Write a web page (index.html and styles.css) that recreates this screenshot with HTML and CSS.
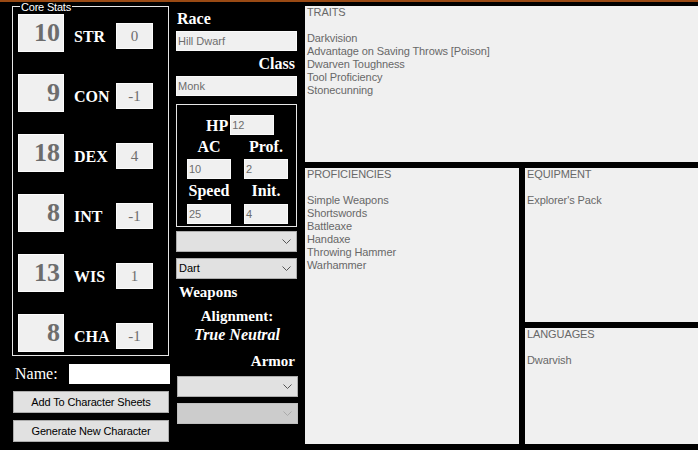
FILE: index.html
```html
<!DOCTYPE html>
<html>
<head>
<meta charset="utf-8">
<link rel="stylesheet" href="styles.css">
</head>
<body>
<div class="app">
  <div class="left">
    <div class="core">
      <span class="legend">Core Stats</span>
      <div class="stat"><div class="big">10</div><div class="abbr">STR</div><div class="mod">0</div></div>
      <div class="stat"><div class="big">9</div><div class="abbr">CON</div><div class="mod">-1</div></div>
      <div class="stat"><div class="big">18</div><div class="abbr">DEX</div><div class="mod">4</div></div>
      <div class="stat"><div class="big">8</div><div class="abbr">INT</div><div class="mod">-1</div></div>
      <div class="stat"><div class="big">13</div><div class="abbr">WIS</div><div class="mod">1</div></div>
      <div class="stat"><div class="big">8</div><div class="abbr">CHA</div><div class="mod">-1</div></div>
    </div>
    <div class="namerow"><span class="namelabel">Name:</span><div class="nameinput"></div></div>
    <div class="btn btn1">Add To Character Sheets</div>
    <div class="btn btn2">Generate New Character</div>
  </div>

  <div class="mid">
    <div class="lbl race">Race</div>
    <div class="tb tb1">Hill Dwarf</div>
    <div class="lbl cls">Class</div>
    <div class="tb tb2">Monk</div>
    <div class="vitals">
      <div class="hprow"><span class="vl">HP</span><div class="vin">12</div></div>
      <div class="vgrid g1">
        <span class="vl">AC</span><span class="vl">Prof.</span>
      </div>
      <div class="vgrid g2">
        <div class="vin">10</div><div class="vin">2</div>
      </div>
      <div class="vgrid g3">
        <span class="vl">Speed</span><span class="vl">Init.</span>
      </div>
      <div class="vgrid g4">
        <div class="vin">25</div><div class="vin">4</div>
      </div>
    </div>
    <div class="combo c1"><span></span><svg class="chev" width="9" height="5" viewBox="0 0 9 5"><polyline points="0.5,0.5 4.5,4.5 8.5,0.5" fill="none" stroke="#555" stroke-width="1"/></svg></div>
    <div class="combo c2"><span>Dart</span><svg class="chev" width="9" height="5" viewBox="0 0 9 5"><polyline points="0.5,0.5 4.5,4.5 8.5,0.5" fill="none" stroke="#555" stroke-width="1"/></svg></div>
    <div class="lbl weapons">Weapons</div>
    <div class="lbl align">Alignment:</div>
    <div class="lbl neutral">True Neutral</div>
    <div class="lbl armor">Armor</div>
    <div class="combo c3"><span></span><svg class="chev" width="9" height="5" viewBox="0 0 9 5"><polyline points="0.5,0.5 4.5,4.5 8.5,0.5" fill="none" stroke="#555" stroke-width="1"/></svg></div>
    <div class="combo c4 disabled"><span></span><svg class="chev" width="9" height="5" viewBox="0 0 9 5"><polyline points="0.5,0.5 4.5,4.5 8.5,0.5" fill="none" stroke="#aaa" stroke-width="1"/></svg></div>
  </div>

  <div class="right">
    <div class="panel traits">TRAITS<br><br>Darkvision<br>Advantage on Saving Throws [Poison]<br>Dwarven Toughness<br>Tool Proficiency<br>Stonecunning</div>
    <div class="panel prof">PROFICIENCIES<br><br>Simple Weapons<br>Shortswords<br>Battleaxe<br>Handaxe<br>Throwing Hammer<br>Warhammer</div>
    <div class="panel equip">EQUIPMENT<br><br>Explorer's Pack</div>
    <div class="panel lang">LANGUAGES<br><br>Dwarvish</div>
  </div>
</div>
</body>
</html>
```
FILE: styles.css
```css
html, body { margin: 0; padding: 0; background: #000; }
.app {
  width: 698px; height: 450px; box-sizing: border-box;
  border-top: 2px solid #9a4a14;
  background: #000; display: flex; overflow: hidden;
  font-family: "Liberation Sans", Arial, sans-serif;
}
/* left column */
.left { margin-left: 12px; width: 158px; display: flex; flex-direction: column; }
.core {
  position: relative; margin-top: 4px; width: 157px; height: 350px; box-sizing: border-box;
  border: 1px solid #e6e6e6; padding: 7px 0 0 5px;
}
.legend {
  position: absolute; top: -6px; left: 7px; padding: 0 1px; background: #000;
  color: #fff; font-size: 11px; line-height: 13px; letter-spacing: -0.2px;
}
.stat { display: flex; align-items: flex-start; height: 60px; }
.big {
  width: 46px; height: 38px; box-sizing: border-box; background: #f0f0f0; border: 1px solid #fcfcfc;
  font: bold 26px/36px "Liberation Serif", serif; color: #6d6d6d; text-align: right; padding-right: 3px;
}
.abbr { width: 42px; margin-left: 10px; margin-top: 14px; font: bold 16px/18px "Liberation Serif", serif; color: #fff; }
.mod {
  width: 37px; height: 26px; margin-top: 9px; box-sizing: border-box; background: #f0f0f0; border: 1px solid #fcfcfc;
  font: 15px/24px "Liberation Serif", serif; color: #6d6d6d; text-align: center;
}
.namerow { display: flex; align-items: center; margin-top: 8px; height: 20px; }
.namelabel { margin-left: 3px; width: 54px; color: #fff; font: 16px/18px "Liberation Serif", serif; }
.nameinput { width: 101px; height: 20px; background: #fff; }
.btn {
  width: 156px; height: 22px; box-sizing: border-box; margin-left: 1px; background: #e1e1e1; border: 1px solid #adadad;
  font-size: 11px; line-height: 20px; text-align: center; color: #000; letter-spacing: -0.15px;
}
.btn1 { margin-top: 7px; }
.btn2 { margin-top: 7px; }

/* middle column */
.mid { margin-left: 6px; width: 122px; display: flex; flex-direction: column; }
.lbl { color: #fff; font: bold 15px/17px "Liberation Serif", serif; }
.race { font-size: 16px; line-height: 18px; margin-top: 8px; padding-left: 1px; }
.cls { font-size: 16px; line-height: 18px; margin-top: 4px; text-align: right; padding-right: 3px; }
.tb {
  width: 121px; height: 20px; box-sizing: border-box; background: #f0f0f0; border: 1px solid #fafafa;
  font-size: 11px; line-height: 18px; color: #6d6d6d; padding-left: 1px;
}
.tb1 { margin-top: 3px; }
.tb2 { margin-top: 3px; }
.vitals {
  margin-top: 8px; width: 121px; height: 123px; box-sizing: border-box; border: 1px solid #e6e6e6;
  padding: 10px 0 0 10px;
}
.vl { color: #fff; font: bold 15px/17px "Liberation Serif", serif; text-align: center; }
.vin {
  width: 44px; height: 20px; box-sizing: border-box; background: #f0f0f0; border: 1px solid #fafafa;
  font-size: 11px; line-height: 18px; color: #6d6d6d; padding-left: 1px;
}
.hprow { display: flex; align-items: center; margin-left: 19px; gap: 2px; height: 20px; }
.hprow .vl { font-size: 16px; }
.vgrid { display: grid; grid-template-columns: 44px 44px; column-gap: 13px; }
.g1 { margin-top: 3px; }
.g1 .vl, .g3 .vl { font-size: 16px; line-height: 17px; }
.g2 { margin-top: 4px; }
.g3 { margin-top: 3px; }
.g4 { margin-top: 5px; }
.combo {
  position: relative; width: 121px; height: 21px; box-sizing: border-box; background: #e1e1e1; border: 1px solid #adadad;
  font-size: 11px; line-height: 19px; color: #000; padding-left: 2px;
}
.combo .chev { position: absolute; right: 5px; top: 7px; }
.combo.disabled { background: #cccccc; border-color: #bfbfbf; }
.c1 { margin-top: 4px; }
.c2 { margin-top: 6px; }
.weapons { margin-top: 5px; padding-left: 3px; }
.align { margin-top: 7px; text-align: center; }
.neutral { margin-top: 1px; text-align: center; font-style: italic; font-size: 16px; }
.armor { margin-top: 10px; text-align: right; padding-right: 3px; }
.c3 { margin-top: 6px; margin-left: 1px; }
.c4 { margin-top: 6px; margin-left: 1px; }

/* right panels */
.right {
  margin-left: 7px; width: 393px; display: grid;
  grid-template-columns: 214px 173px; grid-template-rows: 156px 154px 116px;
  column-gap: 6px; row-gap: 6px; padding-top: 4px;
}
.panel {
  background: #f0f0f0; color: #686868; font-size: 11px; line-height: 13px; padding-left: 2px; letter-spacing: -0.1px;
}
.traits { grid-column: 1 / 3; }
.prof { grid-row: 2 / 4; }
```
